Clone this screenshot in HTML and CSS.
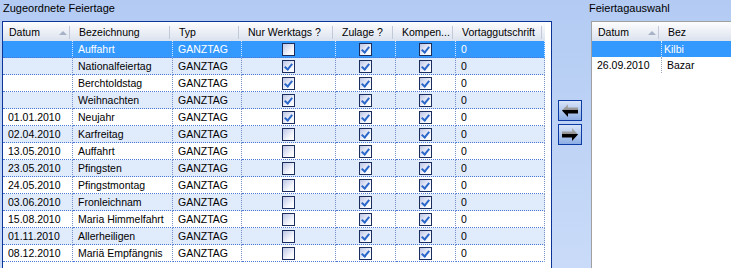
FILE: index.html
```html
<!DOCTYPE html>
<html lang="de">
<head>
    <meta charset="UTF-8">
    <meta name="viewport" content="width=device-width, initial-scale=1.0">
    <title>Feiertage</title>
    <link rel="stylesheet" href="styles.css">
</head>
<body>
    <div class="screen">
        <section class="pane pane-left">
            <div class="caption">Zugeordnete Feiertage</div>
            <div class="grid grid-main">
                <table>
                    <thead>
                        <tr>
                            <th class="col-datum sorted">Datum</th>
                            <th class="col-bez">Bezeichnung</th>
                            <th class="col-typ">Typ</th>
                            <th class="col-werk">Nur Werktags ?</th>
                            <th class="col-zul">Zulage ?</th>
                            <th class="col-komp">Kompen...</th>
                            <th class="col-vor">Vortaggutschrift</th>
                        </tr>
                    </thead>
                    <tbody>
                        <tr class="sel">
                            <td></td><td>Auffahrt</td><td>GANZTAG</td>
                            <td class="chk"><span class="cb"></span></td>
                            <td class="chk"><span class="cb on"></span></td>
                            <td class="chk"><span class="cb on"></span></td>
                            <td>0</td>
                        </tr>
                        <tr class="alt">
                            <td></td><td>Nationalfeiertag</td><td>GANZTAG</td>
                            <td class="chk"><span class="cb on"></span></td>
                            <td class="chk"><span class="cb on"></span></td>
                            <td class="chk"><span class="cb on"></span></td>
                            <td>0</td>
                        </tr>
                        <tr>
                            <td></td><td>Berchtoldstag</td><td>GANZTAG</td>
                            <td class="chk"><span class="cb on"></span></td>
                            <td class="chk"><span class="cb on"></span></td>
                            <td class="chk"><span class="cb on"></span></td>
                            <td>0</td>
                        </tr>
                        <tr class="alt">
                            <td></td><td>Weihnachten</td><td>GANZTAG</td>
                            <td class="chk"><span class="cb on"></span></td>
                            <td class="chk"><span class="cb on"></span></td>
                            <td class="chk"><span class="cb on"></span></td>
                            <td>0</td>
                        </tr>
                        <tr>
                            <td>01.01.2010</td><td>Neujahr</td><td>GANZTAG</td>
                            <td class="chk"><span class="cb on"></span></td>
                            <td class="chk"><span class="cb on"></span></td>
                            <td class="chk"><span class="cb on"></span></td>
                            <td>0</td>
                        </tr>
                        <tr class="alt">
                            <td>02.04.2010</td><td>Karfreitag</td><td>GANZTAG</td>
                            <td class="chk"><span class="cb"></span></td>
                            <td class="chk"><span class="cb on"></span></td>
                            <td class="chk"><span class="cb on"></span></td>
                            <td>0</td>
                        </tr>
                        <tr>
                            <td>13.05.2010</td><td>Auffahrt</td><td>GANZTAG</td>
                            <td class="chk"><span class="cb"></span></td>
                            <td class="chk"><span class="cb on"></span></td>
                            <td class="chk"><span class="cb on"></span></td>
                            <td>0</td>
                        </tr>
                        <tr class="alt">
                            <td>23.05.2010</td><td>Pfingsten</td><td>GANZTAG</td>
                            <td class="chk"><span class="cb"></span></td>
                            <td class="chk"><span class="cb on"></span></td>
                            <td class="chk"><span class="cb on"></span></td>
                            <td>0</td>
                        </tr>
                        <tr>
                            <td>24.05.2010</td><td>Pfingstmontag</td><td>GANZTAG</td>
                            <td class="chk"><span class="cb"></span></td>
                            <td class="chk"><span class="cb on"></span></td>
                            <td class="chk"><span class="cb on"></span></td>
                            <td>0</td>
                        </tr>
                        <tr class="alt">
                            <td>03.06.2010</td><td>Fronleichnam</td><td>GANZTAG</td>
                            <td class="chk"><span class="cb"></span></td>
                            <td class="chk"><span class="cb on"></span></td>
                            <td class="chk"><span class="cb on"></span></td>
                            <td>0</td>
                        </tr>
                        <tr>
                            <td>15.08.2010</td><td>Maria Himmelfahrt</td><td>GANZTAG</td>
                            <td class="chk"><span class="cb"></span></td>
                            <td class="chk"><span class="cb on"></span></td>
                            <td class="chk"><span class="cb on"></span></td>
                            <td>0</td>
                        </tr>
                        <tr class="alt">
                            <td>01.11.2010</td><td>Allerheiligen</td><td>GANZTAG</td>
                            <td class="chk"><span class="cb"></span></td>
                            <td class="chk"><span class="cb on"></span></td>
                            <td class="chk"><span class="cb on"></span></td>
                            <td>0</td>
                        </tr>
                        <tr>
                            <td>08.12.2010</td><td>Mariä Empfängnis</td><td>GANZTAG</td>
                            <td class="chk"><span class="cb"></span></td>
                            <td class="chk"><span class="cb on"></span></td>
                            <td class="chk"><span class="cb on"></span></td>
                            <td>0</td>
                        </tr>
                    </tbody>
                </table>
            </div>
        </section>

        <div class="movers">
            <button class="mover" title="Hinzufügen">
                <svg width="22" height="19" viewBox="0 0 22 19">
                    <defs>
                        <linearGradient id="arrowShade" x1="0" y1="0" x2="0" y2="1">
                            <stop offset="0" stop-color="#b4b4b4"/>
                            <stop offset="0.5" stop-color="#8e8e8e"/>
                            <stop offset="0.5" stop-color="#000"/>
                            <stop offset="1" stop-color="#000"/>
                        </linearGradient>
                    </defs>
                    <polygon points="3,9.5 9,3 9,6.5 19,6.5 19,12.5 9,12.5 9,16" fill="url(#arrowShade)"/>
                </svg>
            </button>
            <button class="mover" title="Entfernen">
                <svg width="22" height="19" viewBox="0 0 22 19">
                    <polygon points="3,9.5 9,3 9,6.5 19,6.5 19,12.5 9,12.5 9,16" fill="url(#arrowShade)" transform="matrix(-1 0 0 1 22 0)"/>
                </svg>
            </button>
        </div>

        <section class="pane pane-right">
            <div class="caption">Feiertagauswahl</div>
            <div class="grid grid-pick">
                <table>
                    <thead>
                        <tr>
                            <th class="col-datum sorted">Datum</th>
                            <th class="col-name">Bez</th>
                        </tr>
                    </thead>
                    <tbody>
                        <tr class="sel">
                            <td></td><td class="name-edit">Kilbi</td>
                        </tr>
                        <tr>
                            <td>26.09.2010</td><td>Bazar</td>
                        </tr>
                    </tbody>
                </table>
            </div>
        </section>
    </div>
</body>
</html>
```

FILE: styles.css
```css
html, body {
    margin: 0;
    height: 100%;
    overflow: hidden;
}
body {
    font-family: "Liberation Sans", Arial, sans-serif;
    font-size: 10.5px;
    color: #000;
    background: linear-gradient(#b3cbf3, #c9dbf8);
}
.screen {
    display: flex;
    height: 100%;
    padding-left: 2px;
}
.caption {
    height: 21px;
    box-sizing: border-box;
    padding: 2px 0 0 1px;
    font-size: 11px;
    line-height: 13px;
    white-space: nowrap;
}

/* grids */
.grid {
    background: #fff;
    height: 247px;
    overflow: hidden;
}
.grid table {
    border-collapse: separate;
    border-spacing: 0;
    table-layout: fixed;
}
.grid th,
.grid td {
    box-sizing: border-box;
    white-space: nowrap;
    overflow: hidden;
}
.grid th {
    font-weight: normal;
    text-align: left;
    padding: 1px 0 0 6px;
    line-height: 18px;
    background:
        linear-gradient(#c2c9d8, #c2c9d8) right 3px top 4px / 1px 13px no-repeat,
        linear-gradient(#fdfdfe, #dbe2ee);
}
.grid th.sorted {
    position: relative;
}
.grid th.sorted::after {
    content: "";
    position: absolute;
    right: 6px;
    top: 9px;
    width: 0;
    height: 0;
    border-left: 4px solid transparent;
    border-right: 4px solid transparent;
    border-bottom: 4px solid #a7b1c5;
}
.grid td {
    padding: 0 0 0 5px;
    line-height: 16px;
    border-bottom: 1px dotted #4b78d5;
    border-right: 1px dotted #7890c8;
}
.grid tr.alt td {
    background: #e0ebfc;
}
.grid tr.sel td {
    background: #3399ff;
    color: #fff;
    border-right-color: #d6e8ff;
}

.grid-main {
    width: 548px;
    border: 1px solid #0d3597;
}
.grid-main table {
    width: 542px;
}
.col-datum { width: 70px; }
.col-bez { width: 100px; }
.col-typ { width: 69px; }
.col-werk { width: 94px; }
.col-zul { width: 60px; }
.col-komp { width: 60px; }
.col-vor { width: 89px; }

/* checkbox cells */
.grid td.chk {
    padding: 0;
}
.cb {
    display: block;
    position: relative;
    width: 13px;
    height: 13px;
    box-sizing: border-box;
    margin: 2px auto 1px;
    border: 1px solid #1b2d5c;
    background: linear-gradient(135deg, #bcc5e6, #f4f6fc 65%, #fff);
}
.cb.on::after {
    content: "";
    position: absolute;
    left: 3px;
    top: 1px;
    width: 3px;
    height: 6px;
    border-right: 2px solid #2a67c9;
    border-bottom: 2px solid #2a67c9;
    transform: rotate(40deg);
}

/* move buttons */
.movers {
    width: 36px;
    flex: none;
    box-sizing: border-box;
    padding: 100px 0 0 6px;
    display: flex;
    flex-direction: column;
    gap: 3px;
}
.mover {
    display: block;
    width: 24px;
    height: 21px;
    padding: 0;
    border: 1px solid #0c3ba3;
    background: linear-gradient(#d8e5f9, #8daee5);
    cursor: pointer;
}
.mover svg {
    display: block;
}

/* right pick list */
.pane-right {
    flex: 1;
    min-width: 0;
}
.grid-pick {
    margin-left: 3px;
    border-left: 1px solid #a0a0a0;
    border-top: 1px solid #a0a0a0;
}
.grid-pick table {
    width: 200px;
}
.grid-pick td {
    border-bottom: none;
    border-right: 1px dotted #9aa6bd;
}
.col-name { width: 130px; }
.grid td.name-edit {
    padding-left: 2px;
}
```
